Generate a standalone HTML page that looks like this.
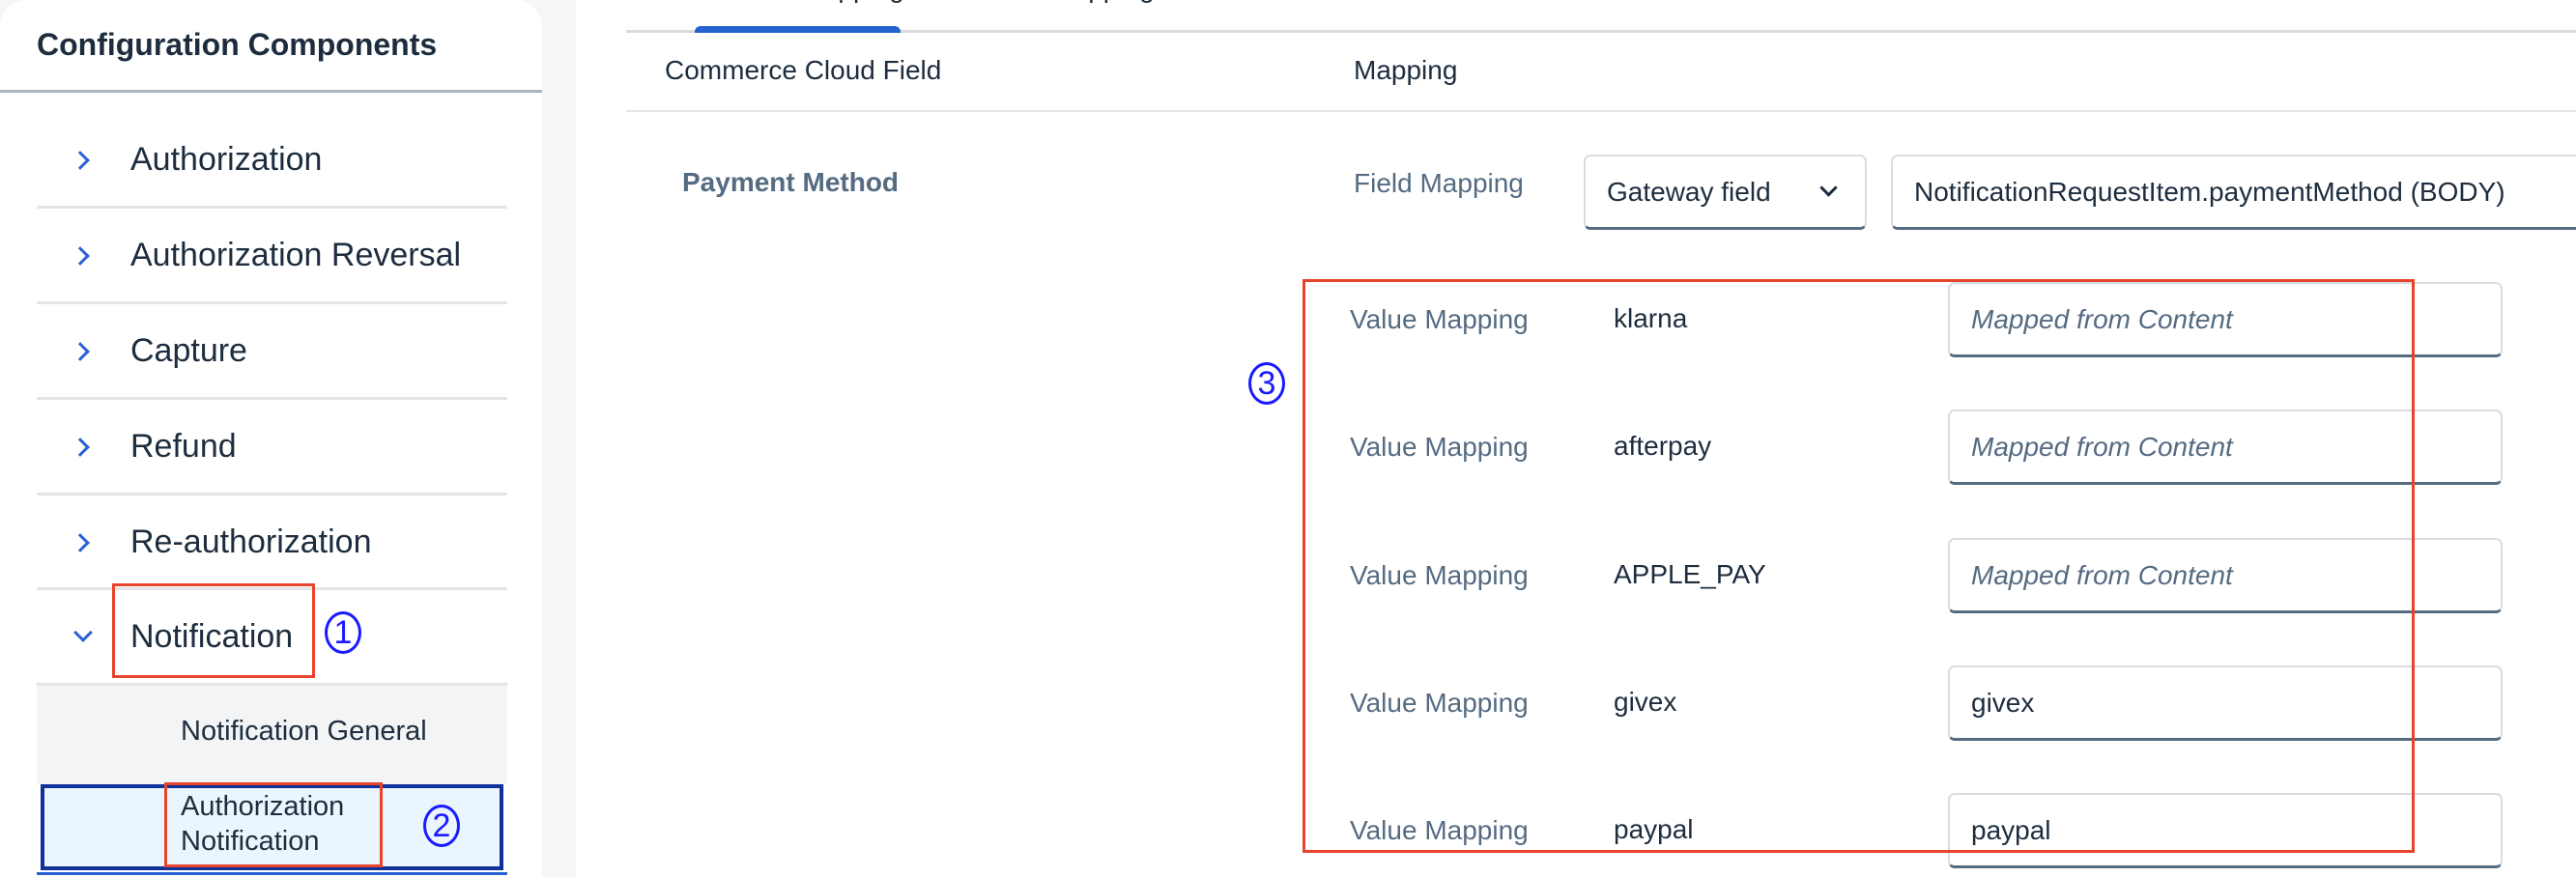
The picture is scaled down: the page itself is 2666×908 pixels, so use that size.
<!DOCTYPE html>
<html><head><meta charset="utf-8"><style>
*{margin:0;padding:0;box-sizing:border-box}
body{width:2666px;height:908px;overflow:hidden;background:#f5f6f7;font-family:"Liberation Sans",sans-serif;color:#1d2d3e;position:relative}
.a{position:absolute;white-space:nowrap}
.side{position:absolute;left:0;top:0;width:561px;height:908px;background:#fff;border-radius:28px 28px 0 0}
.main{position:absolute;left:596px;top:0;width:2070px;height:908px;background:#fff}
.it{font-size:34px;line-height:40px}
.div{position:absolute;left:38px;width:487px;height:3px;background:#e5e5e5}
.chev{position:absolute;width:14px;height:14px;border-right:3px solid #2a62d2;border-bottom:3px solid #2a62d2}
.lab{color:#556b82;font-size:28px;line-height:34px}
.inp{position:absolute;background:#fff;border:2px solid #d9dde1;border-bottom:3px solid #556b82;border-radius:7px}
.inp span{position:absolute;left:22px;top:20px;font-size:28px;line-height:34px}
.ph{color:#556b82;font-style:italic}
.red{position:absolute;border:3px solid #e8442c}
.circ{position:absolute;width:38px;height:44px;border:3px solid #1a1aff;border-radius:50%;color:#1a1aff;font-size:34px;line-height:38px;text-align:center}
</style></head><body>
<div class="side"></div>
<div class="main"></div>
<div class="a" style="left:38px;top:26px;font-size:32px;font-weight:bold;line-height:40px">Configuration Components</div>
<div class="a" style="left:0;top:93px;width:561px;height:3px;background:#a9b4be"></div>

<div class="chev" style="left:76px;top:159px;transform:rotate(-45deg)"></div>
<div class="a it" style="left:135px;top:145px">Authorization</div>
<div class="div" style="top:213px"></div>
<div class="chev" style="left:76px;top:258px;transform:rotate(-45deg)"></div>
<div class="a it" style="left:135px;top:244px">Authorization Reversal</div>
<div class="div" style="top:312px"></div>
<div class="chev" style="left:76px;top:357px;transform:rotate(-45deg)"></div>
<div class="a it" style="left:135px;top:343px">Capture</div>
<div class="div" style="top:411px"></div>
<div class="chev" style="left:76px;top:456px;transform:rotate(-45deg)"></div>
<div class="a it" style="left:135px;top:442px">Refund</div>
<div class="div" style="top:510px"></div>
<div class="chev" style="left:76px;top:555px;transform:rotate(-45deg)"></div>
<div class="a it" style="left:135px;top:541px">Re-authorization</div>
<div class="div" style="top:608px"></div>
<div class="chev" style="left:79px;top:648px;transform:rotate(45deg)"></div>
<div class="a it" style="left:135px;top:639px">Notification</div>
<div class="div" style="top:707px"></div>
<div class="a" style="left:38px;top:710px;width:487px;height:102px;background:#f3f4f6"></div>
<div class="a" style="left:187px;top:740px;font-size:29px;line-height:34px">Notification General</div>
<div class="a" style="left:42px;top:812px;width:479px;height:89px;background:#eaf5fd;border:4px solid #10309a"></div>
<div class="a" style="left:187px;top:817px;font-size:29px;line-height:36px">Authorization<br>Notification</div>
<div class="a" style="left:38px;top:903px;width:487px;height:3px;background:#2a62d2"></div>
<div class="red" style="left:116px;top:604px;width:210px;height:98px"></div>
<div class="circ" style="left:336px;top:633px">1</div>
<div class="red" style="left:170px;top:810px;width:226px;height:88px"></div>
<div class="circ" style="left:438px;top:833px">2</div>

<div class="a" style="left:760px;top:-29px;font-size:28px;line-height:34px">Field Mapping</div>
<div class="a" style="left:1010px;top:-29px;font-size:28px;line-height:34px">Value Mapping</div>
<div class="a" style="left:648px;top:31px;width:2018px;height:3px;background:#dadada"></div>
<div class="a" style="left:719px;top:27px;width:213px;height:7px;background:#2563d0;border-radius:6px 6px 0 0"></div>
<div class="a" style="left:688px;top:56px;font-size:28px;line-height:34px">Commerce Cloud Field</div>
<div class="a" style="left:1401px;top:56px;font-size:28px;line-height:34px">Mapping</div>
<div class="a" style="left:648px;top:114px;width:2018px;height:2px;background:#e5e5e5"></div>
<div class="a lab" style="left:706px;top:172px;font-weight:bold">Payment Method</div>
<div class="a lab" style="left:1401px;top:173px">Field Mapping</div>
<div class="inp" style="left:1639px;top:160px;width:293px;height:78px"><span>Gateway field</span></div>
<div class="chev" style="left:1886px;top:188px;width:13px;height:13px;border-color:#1d2d3e;transform:rotate(45deg)"></div>
<div class="inp" style="left:1957px;top:160px;width:760px;height:78px"><span>NotificationRequestItem.paymentMethod (BODY)</span></div>

<div class="a lab" style="left:1397px;top:314px">Value Mapping</div><div class="a" style="left:1670px;top:314px;font-size:28px">klarna</div>
<div class="inp" style="left:2016px;top:292px;width:574px;height:78px"><span class="ph">Mapped from Content</span></div>
<div class="a lab" style="left:1397px;top:446px">Value Mapping</div><div class="a" style="left:1670px;top:446px;font-size:28px">afterpay</div>
<div class="inp" style="left:2016px;top:424px;width:574px;height:78px"><span class="ph">Mapped from Content</span></div>
<div class="a lab" style="left:1397px;top:579px">Value Mapping</div><div class="a" style="left:1670px;top:579px;font-size:28px">APPLE_PAY</div>
<div class="inp" style="left:2016px;top:557px;width:574px;height:78px"><span class="ph">Mapped from Content</span></div>
<div class="a lab" style="left:1397px;top:711px">Value Mapping</div><div class="a" style="left:1670px;top:711px;font-size:28px">givex</div>
<div class="inp" style="left:2016px;top:689px;width:574px;height:78px"><span>givex</span></div>
<div class="a lab" style="left:1397px;top:843px">Value Mapping</div><div class="a" style="left:1670px;top:843px;font-size:28px">paypal</div>
<div class="inp" style="left:2016px;top:821px;width:574px;height:78px"><span>paypal</span></div>
<div class="red" style="left:1348px;top:289px;width:1151px;height:594px"></div>
<div class="circ" style="left:1292px;top:375px">3</div>
</body></html>
